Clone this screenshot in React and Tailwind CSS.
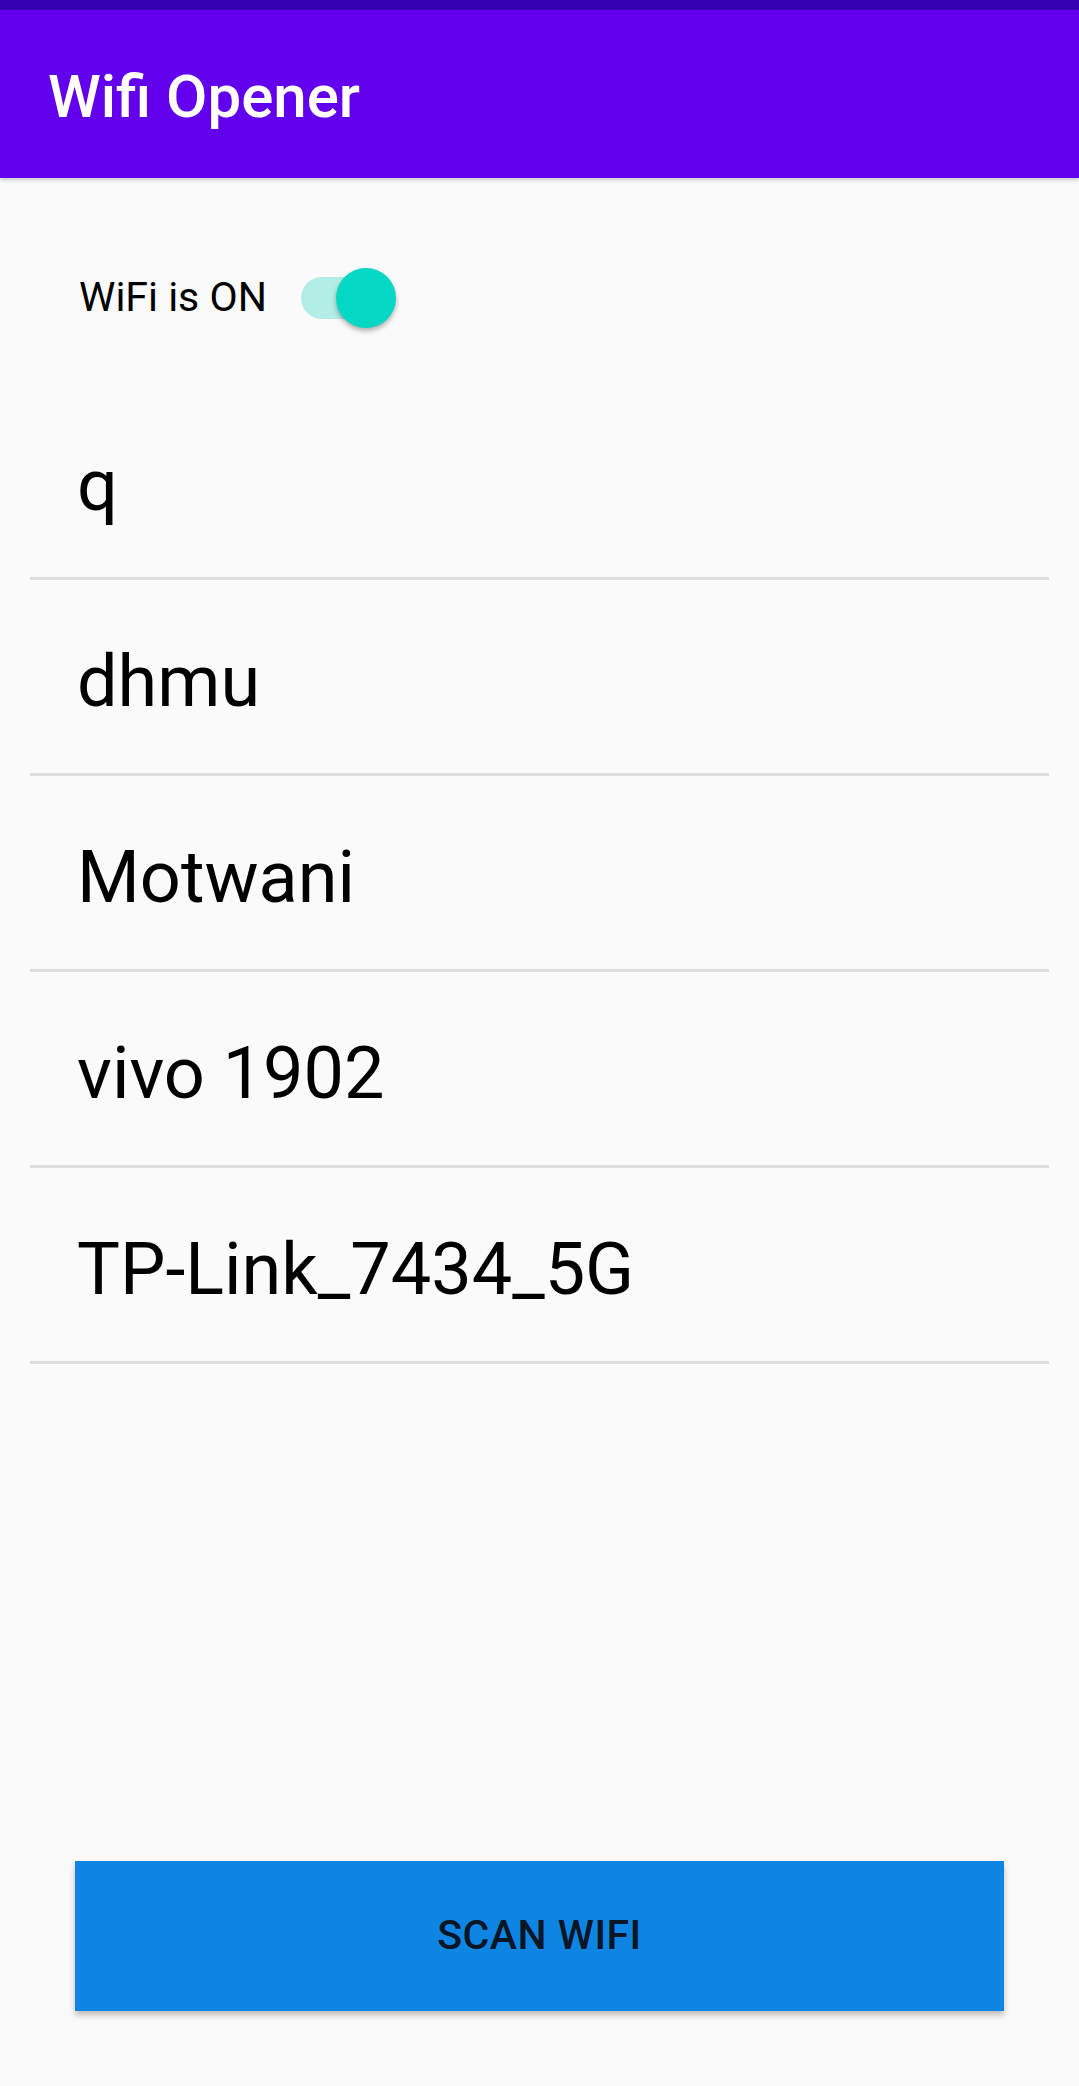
import React, { useState } from 'react';

const networks = ['q', 'dhmu', 'Motwani', 'vivo 1902', 'TP-Link_7434_5G'];

const App = () => {
  const [wifiOn, setWifiOn] = useState(true);

  return (
    <div className="min-h-[2086px] flex flex-col bg-[#fafafa] font-['Roboto',_sans-serif]">
      {/* Status bar + app bar */}
      <div className="h-[10px] bg-[#3700b3]"></div>
      <div className="h-[168px] bg-[#6200ee] flex items-center pl-[48px] shadow-[0_2px_4px_rgba(0,0,0,0.2)] relative z-10">
        <h1 className="text-white text-[60px] font-medium pt-[6px]">Wifi Opener</h1>
      </div>

      {/* Wifi switch */}
      <div className="h-[206px] pt-[34px] pl-[79px] flex items-center">
        <span className="text-[41px] text-black">WiFi is {wifiOn ? 'ON' : 'OFF'}</span>
        <button onClick={() => setWifiOn(!wifiOn)} className="relative ml-[34px] w-[96px] h-[60px]">
          <span className={`absolute left-0 top-[9px] w-[86px] h-[42px] rounded-full ${wifiOn ? 'bg-[#b2eee6]' : 'bg-[#c4c4c4]'}`}></span>
          <span className={`absolute top-0 w-[60px] h-[60px] rounded-full shadow-[0_3px_5px_rgba(0,0,0,0.3)] ${wifiOn ? 'left-[35px] bg-[#04d7c3]' : 'left-0 bg-[#ececec]'}`}></span>
        </button>
      </div>

      {/* Network list */}
      <ul className="mx-[30px]">
        {networks.map((name) => (
          <li key={name} className="h-[196px] border-b-[3px] border-[#dedede] flex items-center pl-[47px] pt-[10px]">
            <span className="text-[72px] text-black">{name}</span>
          </li>
        ))}
      </ul>

      <div className="flex-1"></div>

      {/* Scan button */}
      <div className="px-[75px] pb-[75px]">
        <button className="w-full h-[150px] bg-[#0f85e3] text-[#0a1626] text-[41px] font-medium tracking-[0.5px] shadow-[0_4px_6px_rgba(0,0,0,0.25)]">
          SCAN WIFI
        </button>
      </div>
    </div>
  );
};

export default App;
